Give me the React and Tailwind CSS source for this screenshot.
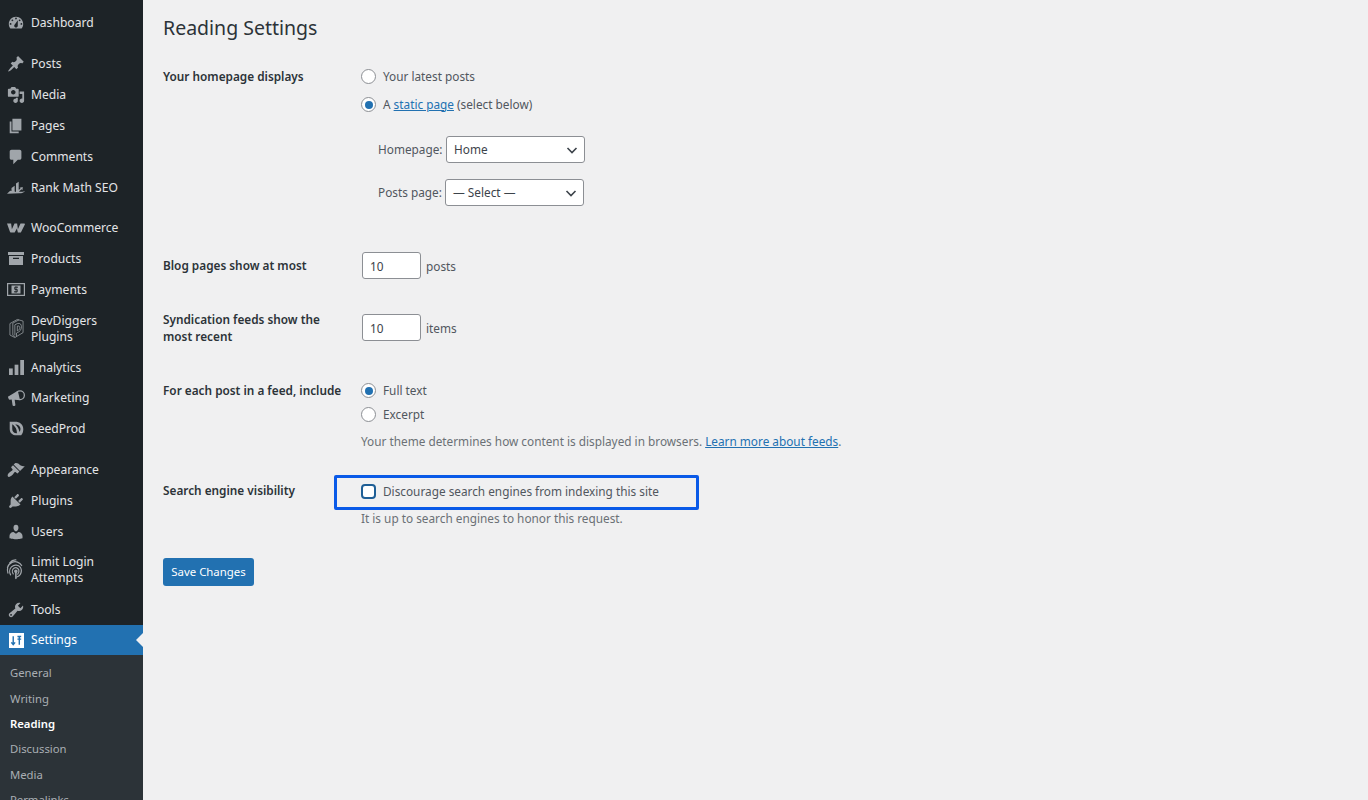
import React from "react";

const P = ({ d, className = "" }) => (
  <svg viewBox="0 0 20 20" className={`w-[18px] h-[18px] fill-current ${className}`}>
    <path fillRule="evenodd" d={d} />
  </svg>
);

const icons = {
  dashboard: <P d="M3.76 16h12.48c1.1-1.37 1.76-3.11 1.76-5 0-4.42-3.58-8-8-8s-8 3.58-8 8c0 1.89.66 3.63 1.76 5zM10 4c.55 0 1 .45 1 1s-.45 1-1 1-1-.45-1-1 .45-1 1-1zM6 6c.55 0 1 .45 1 1s-.45 1-1 1-1-.45-1-1 .45-1 1-1zm8 0c.55 0 1 .45 1 1s-.45 1-1 1-1-.45-1-1 .45-1 1-1zm-5.37 5.55L12 7v6c0 1.1-.9 2-2 2s-2-.9-2-2c0-.57.24-1.08.63-1.45zM4 10c.55 0 1 .45 1 1s-.45 1-1 1-1-.45-1-1 .45-1 1-1zm12 0c.55 0 1 .45 1 1s-.45 1-1 1-1-.45-1-1 .45-1 1-1z" />,
  posts: <P d="M10.44 3.02l1.82-1.82 6.36 6.35-1.83 1.82c-1.05-.68-2.48-.57-3.41.36l-.75.75c-.92.93-1.04 2.35-.35 3.41l-1.83 1.82-2.41-2.41-2.8 2.79c-.42.42-3.38 2.71-3.8 2.29s1.86-3.39 2.28-3.81l2.79-2.79L4.1 9.36l1.83-1.82c1.05.69 2.48.57 3.4-.36l.75-.75c.93-.92 1.05-2.35.36-3.41z" />,
  media: <P d="M13 11V4c0-.55-.45-1-1-1h-1.67L9 1H5L3.67 3H2c-.55 0-1 .45-1 1v7c0 .55.45 1 1 1h10c.55 0 1-.45 1-1zM7 4.5c1.38 0 2.5 1.12 2.5 2.5S8.38 9.5 7 9.5 4.5 8.38 4.5 7 5.62 4.5 7 4.5zM14 6h5v10.5c0 1.38-1.12 2.5-2.5 2.5S14 17.88 14 16.5s1.12-2.5 2.5-2.5c.17 0 .34.02.5.05V9h-3V6zm-4 8.05V13h2v3.5c0 1.38-1.12 2.5-2.5 2.5S7 17.88 7 16.5 8.12 14 9.5 14c.17 0 .34.02.5.05z" />,
  pages: <P d="M6 15V2h10v13H6zm-1 1h8v2H3V5h2v11z" />,
  comments: <P d="M5 2h9c1.1 0 2 .9 2 2v7c0 1.1-.9 2-2 2h-2l-5 5v-5H5c-1.1 0-2-.9-2-2V4c0-1.1.9-2 2-2z" />,
  rank: (
    <svg viewBox="0 0 20 14" className="w-[18px] h-[13px] fill-current">
      <path d="M0 14l3.500-3.500L5 11V7.500L8.500 5v6.500l1.500.5V2.500L13 .5v9l2-1-1-1.300 3.500-.7-.3 3.500-1-1-3 2.500c2 .5 4.500.3 6.800-.7-1.200 1.800-3.500 2.700-6 2.700z" />
    </svg>
  ),
  woo: (
    <svg viewBox="0 0 24 13" preserveAspectRatio="none" className="w-[19px] h-[10px] fill-current">
      <path d="M0 .5h5.500l1 7.500L10 .5h3.500l1 7.500L18 .5h5c.8 0 1.200.8.800 1.600L18.500 12.500h-4l-1.300-5.500-3 5.500H5.500c-.9 0-1.500-.6-1.700-1.500z" />
    </svg>
  ),
  products: (
    <svg viewBox="0 0 16 13" className="w-[16px] h-[13px] fill-current">
      <path fillRule="evenodd" d="M0 0h16v3H0zm1 4h14v9H1zm4 1.800v1.200h6V5.800z" />
    </svg>
  ),
  payments: (
    <svg viewBox="0 0 18 13" className="w-[18px] h-[13px]">
      <rect x=".6" y=".6" width="16.800" height="11.800" fill="none" stroke="currentColor" strokeWidth="1.200" />
      <rect x="4.500" y="2.500" width="9" height="8" fill="currentColor" />
      <path d="M11 4.200H7.800v2.200h2.400v2.400H7" fill="none" stroke="#1d2327" strokeWidth="1" />
      <path d="M9 3.200v6.600" stroke="#1d2327" strokeWidth=".7" />
    </svg>
  ),
  dev: (
    <svg viewBox="0 0 20 28" className="w-[17px] h-[23px] fill-none stroke-current" strokeWidth="0.9">
      <path d="M2 8l9-5 7 2v14l-10 6-6-3z" />
      <path d="M5.500 7.500L13 3.500M5.500 7.500v14.500l2.500 2.500M8 9.500l3-1.500c3.500-1 5 1 5 4 0 3.500-2 6-5 7l-1 .5v4M8 9.500v13" />
      <path d="M11 11v6c2-1 3-2.500 3-4s-1-2.500-3-2z" />
    </svg>
  ),
  analytics: (
    <svg viewBox="0 0 16 16" className="w-[15px] h-[15px] fill-current">
      <rect x="0" y="9" width="4" height="7" />
      <rect x="6" y="5" width="4" height="11" />
      <rect x="12" y="0" width="4" height="16" />
    </svg>
  ),
  marketing: (
    <svg viewBox="0 0 20 20" className="w-[18px] h-[18px] fill-current">
      <path d="M1 8.500l11-6.500 2.500 10.500-6-.5.8 5.500c.1.700-.3 1.300-1 1.400l-1 .1c-.6 0-1-.3-1.100-.9l-1-6.500-2.200.3c-.6 0-1-.3-1.100-.8z" />
      <circle cx="14.500" cy="7" r="4.800" fill="none" stroke="currentColor" strokeWidth="1.400" />
    </svg>
  ),
  seed: (
    <svg viewBox="0 0 20 20" className="w-[17px] h-[17px]">
      <path fill="currentColor" fillRule="evenodd" d="M2 2h6c6 0 10 3 10 9 0 3-1 5.500-2.500 7H10c-5 0-8-3-8-7.500zm3 3v5.500c0 3 2 5 5 5h.5c0-4-1-7-5.500-10.500zm3.500.2c3 2.300 4.500 5.300 5 9 .8-1 1.200-2.200 1.200-3.500 0-3.500-2.500-5.500-6.200-5.500z" />
    </svg>
  ),
  appearance: <P d="M14.480 11.060L7.410 3.990l1.500-1.500c.5-.56 2.300-.47 3.510.32 1.210.8 1.430 1.280 2.910 2.100 1.180.64 2.450 1.260 4.450.85zm-.71.71L6.700 4.700 4.930 6.470c-.39.39-.39 1.020 0 1.410l1.060 1.060c.39.39.39 1.030 0 1.420-.6.6-1.430 1.110-2.210 1.690-.35.26-.7.53-1.010.84C1.430 13.710 0 15.890 1.040 17.280c.92 1.240 3.190-.06 4.790-1.660.31-.31.58-.66.84-1.010.58-.78 1.090-1.610 1.690-2.210.39-.39 1.030-.39 1.420 0l1.060 1.060c.39.39 1.020.39 1.410 0z" />,
  plugins: <P d="M13.110 4.360L9.870 7.600 8 5.730l3.240-3.240c.35-.34 1.050-.2 1.560.32.52.51.66 1.210.31 1.550zm-8 1.770l.91-1.120 9.010 9.010-1.190.84c-.71.71-2.630 1.160-3.820 1.160H6.140L4.900 17.260c-.59.59-1.540.59-2.120 0-.59-.58-.59-1.530 0-2.120l1.240-1.240v-3.880c0-1.130.4-3.190 1.090-3.890zm7.260 3.970l3.240-3.240c.34-.35 1.040-.21 1.550.31.52.51.66 1.210.31 1.550l-3.240 3.250z" />,
  users: <P d="M10 9.250c-2.270 0-2.730-3.440-2.730-3.440C7 4.020 7.820 2 9.970 2c2.160 0 2.980 2.020 2.710 3.810 0 0-.41 3.440-2.680 3.440zm0 2.570L12.720 10c2.390 0 4.520 2.330 4.520 4.530v2.490s-3.650 1.130-7.240 1.130c-3.650 0-7.240-1.130-7.240-1.130v-2.490c0-2.250 1.940-4.480 4.470-4.480z" />,
  limit: (
    <svg viewBox="0 0 20 26" className="w-[18px] h-[23px] fill-none stroke-current -ml-[3px]" strokeWidth="1.400" strokeLinecap="round">
      <path d="M4 5.500C6 3 8.500 2 11 2.200M1.500 11C2 8.500 3.500 6.500 6.500 5c4-1.800 9-.5 11 3.500M2 17c-.6-2-.8-4-.3-5.500" />
      <path d="M5 19c-1.500-2.500-1.500-6.500 1-9 3-3 8-2.500 10 .5 1.500 2.500 1.500 5.500 0 8-1 1.500-2.500 2.500-4 3" />
      <path d="M8 18c-1.500-2-1.200-5 .8-6.500 2-1.300 4.700-.5 5.500 2 .5 1.800 0 3.500-1.200 4.700" />
      <circle cx="11" cy="15" r="1.300" fill="currentColor" />
      <path d="M11 16v7" strokeWidth="1.800" />
    </svg>
  ),
  tools: <P d="M16.680 9.770c-1.340 1.340-3.300 1.670-4.950.99l-5.410 6.520c-.99.99-2.590.99-3.580 0s-.99-2.590 0-3.570l6.520-5.420c-.68-1.650-.35-3.610.99-4.950 1.280-1.280 3.120-1.620 4.720-1.060l-2.890 2.890 2.820 2.820 2.860-2.870c.53 1.580.18 3.390-1.080 4.670zM3.810 16.210c.4.39 1.040.39 1.430 0 .4-.4.4-1.040 0-1.430-.39-.4-1.030-.4-1.430 0-.39.39-.39 1.030 0 1.430z" />,
  settings: (
    <svg viewBox="0 0 16 16" className="w-[15px] h-[15px] text-white">
      <rect width="16" height="16" fill="currentColor" />
      <path d="M4.500 3.500v9M2.500 10l2 2.500 2-2.500M11 3.500v9M9 6.500h4M9 3.800h4" fill="none" stroke="#2271b1" strokeWidth="1.500" />
    </svg>
  ),
};

const menu = [
  { key: "dashboard", label: "Dashboard", h: "h-[31px]", mb: "mb-[10px]" },
  { key: "posts", label: "Posts", h: "h-[31px]" },
  { key: "media", label: "Media", h: "h-[31px]" },
  { key: "pages", label: "Pages", h: "h-[31px]" },
  { key: "comments", label: "Comments", h: "h-[31px]" },
  { key: "rank", label: "Rank Math SEO", h: "h-[31px]", mb: "mb-[9px]" },
  { key: "woo", label: "WooCommerce", h: "h-[31px]" },
  { key: "products", label: "Products", h: "h-[31px]" },
  { key: "payments", label: "Payments", h: "h-[31px]" },
  { key: "dev", label: "DevDiggers Plugins", h: "h-[47px]" },
  { key: "analytics", label: "Analytics", h: "h-[31px]" },
  { key: "marketing", label: "Marketing", h: "h-[30px]" },
  { key: "seed", label: "SeedProd", h: "h-[31px]", mb: "mb-[10px]" },
  { key: "appearance", label: "Appearance", h: "h-[31px]" },
  { key: "plugins", label: "Plugins", h: "h-[31px]" },
  { key: "users", label: "Users", h: "h-[31px]", mb: "-mb-[1px]" },
  { key: "limit", label: "Limit Login Attempts", h: "h-[47px]", mb: "mb-[1px]" },
  { key: "tools", label: "Tools", h: "h-[31px]" },
];

const submenu = ["General", "Writing", "Reading", "Discussion", "Media", "Permalinks"];

const Radio = ({ checked }) => (
  <span className="w-[15px] h-[15px] rounded-full border border-[#8c8f94] bg-white flex items-center justify-center shrink-0">
    {checked && <span className="w-[8px] h-[8px] rounded-full bg-[#2271b1]" />}
  </span>
);

const Line = ({ box, children, className = "" }) => (
  <div className={`flex items-center gap-[7px] h-[17px] ${className}`}>
    {box}
    <span className="whitespace-nowrap">{children}</span>
  </div>
);

const Select = ({ value, w }) => (
  <span className={`${w} h-[27px] rounded-[3px] border border-[#8c8f94] bg-white flex items-center justify-between pl-[7px] pr-[6px] text-[#3c434a]`}>
    <span>{value}</span>
    <svg viewBox="0 0 12 12" className="w-[12px] h-[12px] fill-none stroke-[#3c434a]" strokeWidth="1.600">
      <path d="M1.500 4l4.500 4.500L10.500 4" />
    </svg>
  </span>
);

const NumberBox = () => (
  <span className="w-[59px] h-[27px] ml-px rounded-[3px] border border-[#8c8f94] bg-white flex items-center pl-[7px] pt-[2px] text-[#3c434a]">10</span>
);

const Label = ({ children, className = "" }) => (
  <div className={`w-[198px] pr-[14px] font-semibold text-[#2c3338] leading-[17px] shrink-0 ${className}`}>{children}</div>
);

export default function App() {
  return (
    <div className="flex h-[800px] overflow-hidden bg-[#f0f0f1] text-[11.8px] text-[#50575e] font-['Noto_Sans',sans-serif]">
      <aside className="w-[143px] shrink-0 bg-[#1d2327] overflow-hidden pt-[7px] text-[12.1px] text-[#e4e5e7]">
        {menu.map((m) => (
          <div key={m.key} className={`flex items-center ${m.h} ${m.mb || ""}`}>
            <span className="w-[31px] pl-[7px] pr-[6px] shrink-0 flex justify-center text-[#a0a5aa]">{icons[m.key]}</span>
            <span className="leading-[16px] w-[95px]">{m.label}</span>
          </div>
        ))}
        <div className="relative flex items-center h-[30px] bg-[#2271b1] text-white">
          <span className="w-[31px] pl-[7px] pr-[6px] shrink-0 flex justify-center">{icons.settings}</span>
          <span>Settings</span>
          <span className="absolute right-0 top-[8px] border-y-[7px] border-y-transparent border-r-[7px] border-r-[#f0f0f1]" />
        </div>
        <div className="bg-[#2c3338] pt-[6px] text-[11.3px] text-[#a9aeb3]">
          {submenu.map((s) => (
            <div key={s} className={`h-[25.400px] pl-[10px] flex items-center ${s === "Reading" ? "font-semibold text-white" : ""}`}>{s}</div>
          ))}
        </div>
      </aside>

      <main className="flex-1 pl-[20px] pt-[13px]">
        <h1 className="text-[19.500px] leading-[30px] text-[#2c3338] mb-[25px]">Reading Settings</h1>

        <section className="flex">
          <Label>Your homepage displays</Label>
          <div>
            <Line box={<Radio />}>Your latest posts</Line>
            <Line box={<Radio checked />} className="mt-[11px]">
              A <span className="text-[#2271b1] underline">static page</span> (select below)
            </Line>
            <div className="flex items-center mt-[23px] pl-[17px] gap-[3px]">
              <span className="w-[65px] whitespace-nowrap">Homepage:</span>
              <Select value="Home" w="w-[139px]" />
            </div>
            <div className="flex items-center mt-[16px] pl-[17px] gap-[2px]">
              <span className="w-[65px] whitespace-nowrap">Posts page:</span>
              <Select value="— Select —" w="w-[139px]" />
            </div>
          </div>
        </section>

        <section className="flex items-center mt-[46px]">
          <Label>Blog pages show at most</Label>
          <div className="flex items-center gap-[5px]"><NumberBox /><span className="pt-[2px]">posts</span></div>
        </section>

        <section className="flex items-start mt-[32px]">
          <Label>Syndication feeds show the most recent</Label>
          <div className="flex items-center gap-[5px] mt-[3px]"><NumberBox /><span className="pt-[2px]">items</span></div>
        </section>

        <section className="flex mt-[37px]">
          <Label>For each post in a feed, include</Label>
          <div>
            <Line box={<Radio checked />}>Full text</Line>
            <Line box={<Radio />} className="mt-[7px]">Excerpt</Line>
            <p className="mt-[10px] leading-[17px] text-[#6b7076]">
              Your theme determines how content is displayed in browsers. <span className="text-[#2271b1] underline">Learn more about feeds</span>.
            </p>
          </div>
        </section>

        <section className="flex mt-[33px]">
          <Label className="-mt-[1px]">Search engine visibility</Label>
          <div className="relative">
            <span className="absolute left-[-27px] top-[-8px] w-[365px] h-[35px] rounded-[2px] border-[3px] border-[#0a5ae8]" />
            <Line box={<span className="w-[15px] h-[15px] rounded-[4px] border-[2px] border-[#1f5f96] bg-white shrink-0" />}>
              Discourage search engines from indexing this site
            </Line>
            <p className="mt-[10px] leading-[17px] text-[#6b7076]">It is up to search engines to honor this request.</p>
          </div>
        </section>

        <button className="mt-[31px] w-[91px] h-[28px] rounded-[3px] bg-[#2271b1] text-white text-[11.400px] flex items-center justify-center">Save Changes</button>
      </main>
    </div>
  );
}
